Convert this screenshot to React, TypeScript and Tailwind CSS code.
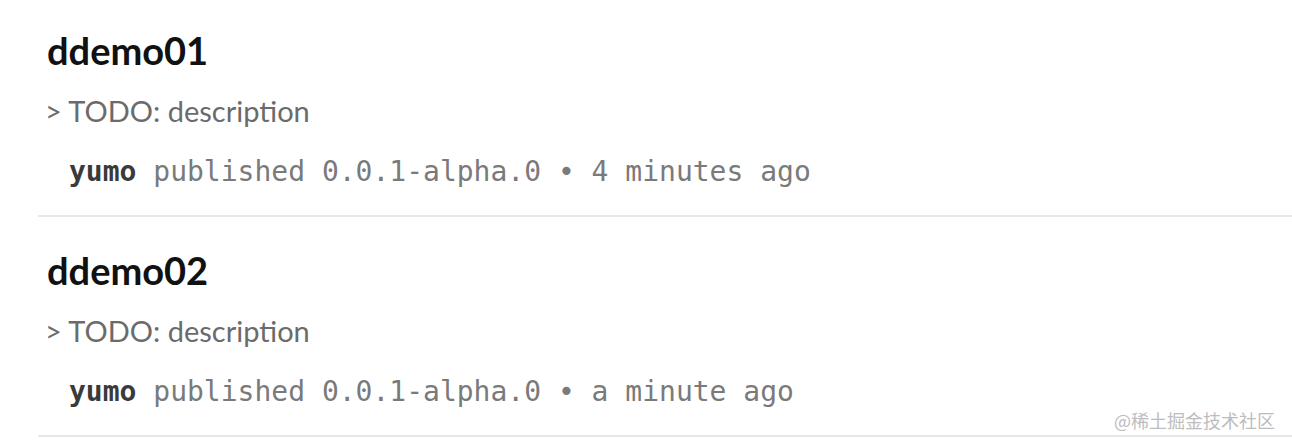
type Pkg = {
  name: string;
  description: string;
  publisher: string;
  version: string;
  when: string;
};

const packages: Pkg[] = [
  {
    name: "ddemo01",
    description: "> TODO: description",
    publisher: "yumo",
    version: "0.0.1-alpha.0",
    when: "4 minutes ago",
  },
  {
    name: "ddemo02",
    description: "> TODO: description",
    publisher: "yumo",
    version: "0.0.1-alpha.0",
    when: "a minute ago",
  },
];

export default function App() {
  return (
    <main className="relative h-[446px] w-[1292px] overflow-hidden bg-white">
      <section className="pl-[38px]">
        {packages.map((pkg) => (
          <div
            key={pkg.name}
            className="border-b-2 border-[#e8e8e8] pt-[28px] pb-[23px] first:pt-[25px]"
          >
            <h3 className="pl-[9px] font-['Lato','Noto_Sans',sans-serif] text-[38px] leading-[50px] font-bold text-[#111111]">
              {pkg.name}
            </h3>

            <p className="mt-[16px] pl-[7px] font-['Lato','Noto_Sans',sans-serif] text-[29px] leading-[40px] text-[#6b6b6b]">
              {pkg.description}
            </p>

            <p className="mt-[21px] pl-[31px] font-['DejaVu_Sans_Mono','Liberation_Mono',monospace] text-[28px] leading-[40px] text-[#7a7a7a]">
              <span className="font-bold text-[#3a3a3a]">{pkg.publisher}</span>{" "}
              published {pkg.version} • {pkg.when}
            </p>
          </div>
        ))}
      </section>

      <span className="absolute right-[17px] bottom-[14px] font-['Noto_Sans_CJK_SC',sans-serif] text-[18px] leading-[24px] text-[#bdbdbd]">
        @稀土掘金技术社区
      </span>
    </main>
  );
}
